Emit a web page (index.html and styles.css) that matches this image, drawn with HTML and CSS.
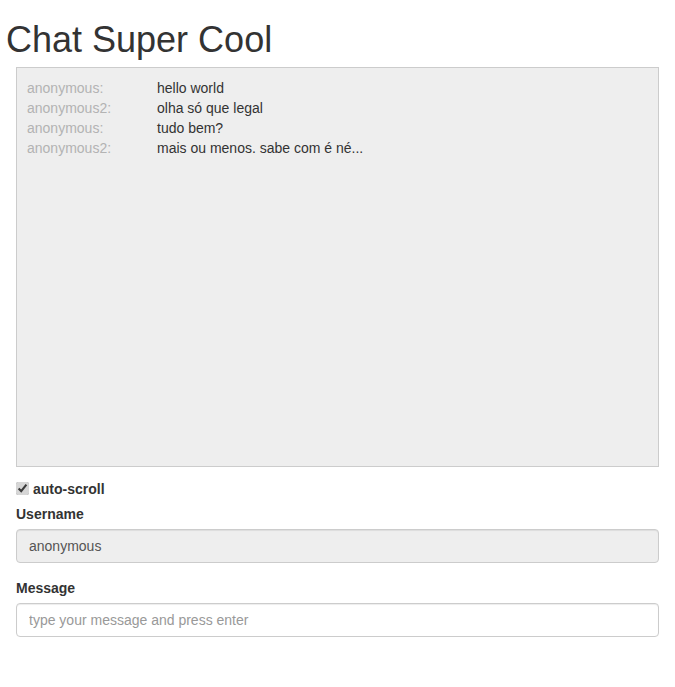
FILE: index.html
```html
<!DOCTYPE html>
<html lang="pt">
<head>
<meta charset="utf-8">
<title>Chat Super Cool</title>
<link rel="stylesheet" href="styles.css">
</head>
<body>
<h1 class="title">Chat Super Cool</h1>
<div class="main">
  <div class="chat-box">
    <div class="msg"><span class="msg-user">anonymous:</span><span class="msg-text">hello world</span></div>
    <div class="msg"><span class="msg-user">anonymous2:</span><span class="msg-text">olha só que legal</span></div>
    <div class="msg"><span class="msg-user">anonymous:</span><span class="msg-text">tudo bem?</span></div>
    <div class="msg"><span class="msg-user">anonymous2:</span><span class="msg-text">mais ou menos. sabe com é né...</span></div>
  </div>
  <label class="checkbox"><input type="checkbox" checked class="checkbox-input"><span>auto-scroll</span></label>
  <div class="form-group">
    <label class="form-label" for="username">Username</label>
    <input id="username" class="form-control form-control-readonly" type="text" value="anonymous" readonly>
  </div>
  <div class="form-group">
    <label class="form-label" for="message">Message</label>
    <input id="message" class="form-control" type="text" placeholder="type your message and press enter">
  </div>
</div>
</body>
</html>
```

FILE: styles.css
```css
* { box-sizing: border-box; }
html, body { margin: 0; padding: 0; background: #fff; }
body {
  font-family: "Liberation Sans", Arial, Helvetica, sans-serif;
  font-size: 14px;
  line-height: 20px;
  color: #333;
}
.title {
  margin: 20px 0 7px;
  padding-left: 6px;
  font-size: 36px;
  font-weight: 500;
  line-height: 1.1;
  color: #333;
}
.main { padding: 0 16px; }
.chat-box {
  height: 400px;
  border: 1px solid #ccc;
  background: #eee;
  padding: 10px;
  overflow-y: auto;
}
.msg { display: grid; grid-template-columns: 130px 1fr; }
.msg-user { color: #b3b3b3; }
.msg-text { color: #333; }
.checkbox {
  display: flex;
  align-items: center;
  gap: 4px;
  margin: 12px 0 5px;
  height: 20px;
  font-weight: bold;
}
.checkbox-input {
  margin: 0;
  width: 13px;
  height: 13px;
  accent-color: #d6d6d6;
}
.form-group { margin-bottom: 15px; }
.form-label {
  display: block;
  font-weight: bold;
  margin-bottom: 5px;
}
.form-control {
  display: block;
  width: 100%;
  height: 34px;
  padding: 6px 12px;
  font-family: inherit;
  font-size: 14px;
  line-height: 20px;
  color: #555;
  background: #fff;
  border: 1px solid #ccc;
  border-radius: 4px;
  box-shadow: inset 0 1px 1px rgba(0,0,0,.075);
  outline: none;
}
.form-control::placeholder { color: #999; }
.form-control-readonly { background: #eee; }
```
